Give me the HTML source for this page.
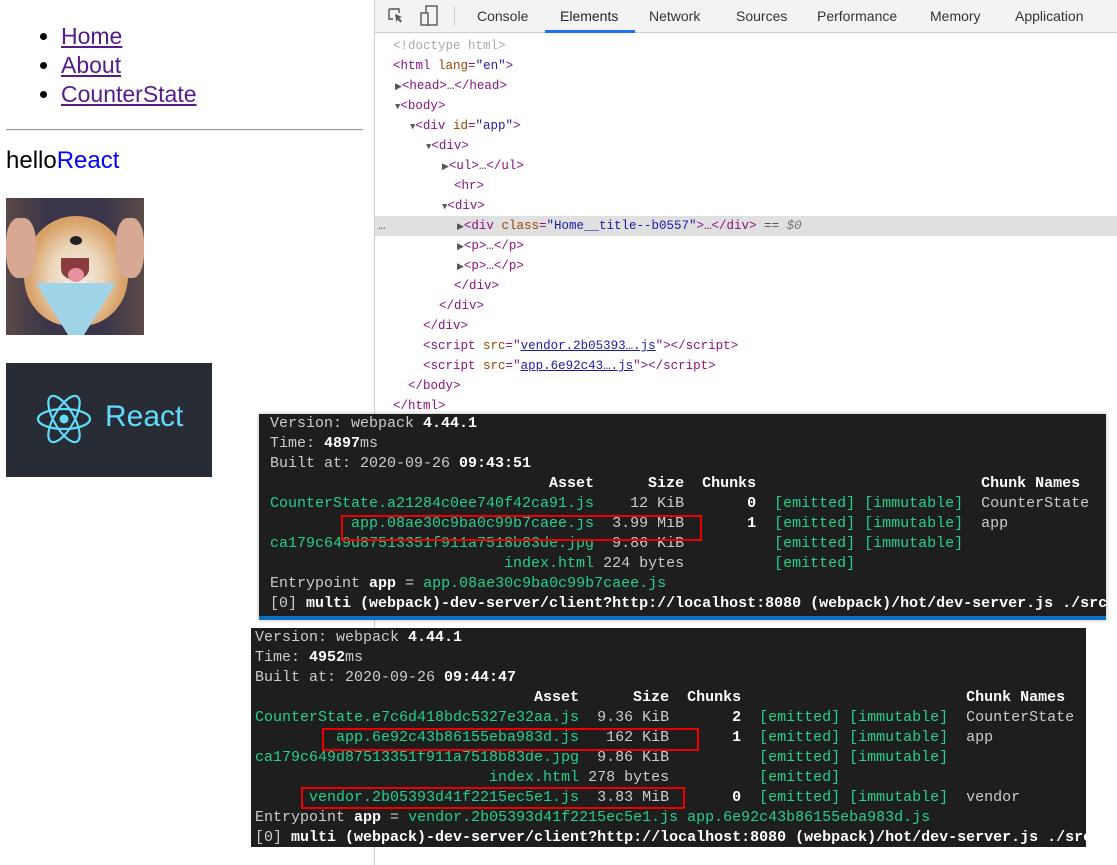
<!DOCTYPE html>
<html><head><meta charset="utf-8"><style>
*{margin:0;padding:0;box-sizing:border-box}
body{width:1117px;height:865px;position:relative;background:#fff;overflow:hidden;font-family:"Liberation Sans",sans-serif}
.abs{position:absolute}
ul.nav{position:absolute;left:61px;top:22px;list-style:disc;font-size:23px;line-height:29px}
ul.nav li{padding-left:0}
ul.nav a{color:#551a8b;text-decoration:underline}
.hr{left:6px;top:129px;width:357px;height:2px;border-top:1px solid #999;border-bottom:1px solid #eee}
.hello{left:6px;top:144px;font-size:24px;line-height:34px}
.dog{left:6px;top:198px;width:138px;height:137px;overflow:hidden;background:#3a3550}
.rbox{left:6px;top:363px;width:206px;height:114px;background:#282c34}
.dt{left:374px;top:0;width:743px;height:865px;border-left:1px solid #ccc;background:#fff}
.tabs{position:absolute;left:0;top:0;width:743px;height:33px;background:#f3f3f3;border-bottom:1px solid #ccc;font-size:14px;color:#333}
.tabs span{position:absolute;top:8px}
.code{position:absolute;left:0;top:36px;width:743px;font-family:"Liberation Mono",monospace;font-size:12.5px;line-height:20px}
.code div{height:20px;white-space:pre;position:relative}
.t{color:#881280}.an{color:#994500}.av{color:#1a1aa6}.g{color:#aaa}
.tri{font-size:9px;color:#555}
.term{position:absolute;background:#1e1e1e;color:#ccc;font-family:"Liberation Mono",monospace;font-size:15px;line-height:20px;white-space:pre;overflow:hidden}
.gr{color:#23d18b}.b{color:#fff;font-weight:bold}
.red{position:absolute;border:2px solid #e00}
</style></head><body>
<ul class="nav"><li><a>Home</a></li><li><a>About</a></li><li><a>CounterState</a></li></ul>
<div class="abs hr"></div>
<div class="abs hello">hello<span style="color:#00f">React</span></div>
<div class="abs dog">
 <div class="abs" style="left:0;top:0;width:138px;height:137px;background:linear-gradient(90deg,#5a4a48 0,#3a3548 30%,#3a3548 70%,#5a4a48 100%)"></div>
 <div class="abs" style="left:18px;top:18px;width:104px;height:110px;border-radius:50% 50% 45% 45%;background:radial-gradient(ellipse at 50% 55%,#f6efe6 0,#ecd6bb 35%,#d9a36a 65%,#c98b4e 100%)"></div>
 <div class="abs" style="left:0;top:20px;width:30px;height:60px;background:#d7a894;border-radius:40%"></div>
 <div class="abs" style="left:110px;top:20px;width:28px;height:60px;background:#d7a894;border-radius:40%"></div>
 <div class="abs" style="left:55px;top:60px;width:28px;height:22px;background:#8a3b3b;border-radius:0 0 50% 50%"></div>
 <div class="abs" style="left:62px;top:70px;width:16px;height:14px;background:#e790a0;border-radius:50%"></div>
 <div class="abs" style="left:64px;top:38px;width:12px;height:9px;background:#222;border-radius:50%"></div>
 <div class="abs" style="left:30px;top:85px;width:80px;height:52px;background:#9fd3e8;clip-path:polygon(0 0,100% 0,60% 100%,40% 100%)"></div>
</div>
<div class="abs rbox">
 <svg class="abs" style="left:30px;top:30px" width="56" height="52" viewBox="-28 -26 56 52"><g fill="none" stroke="#61dafb" stroke-width="2.2"><ellipse rx="26" ry="10"/><ellipse rx="26" ry="10" transform="rotate(60)"/><ellipse rx="26" ry="10" transform="rotate(120)"/></g><circle r="4.5" fill="#61dafb"/></svg>
 <div class="abs" style="left:99px;top:37px;font-size:30px;color:#61dafb">React</div>
</div>
<div class="abs dt">
 <div class="tabs">
  <svg class="abs" style="left:12px;top:7px" width="18" height="18" viewBox="0 0 18 18"><path d="M2 2h10v4M2 2v10h4" fill="none" stroke="#555" stroke-width="1.4"/><path d="M8 7l7 3-3 1 3 3-1.5 1.5-3-3-1 3z" fill="#555"/></svg>
  <svg class="abs" style="left:44px;top:5px" width="20" height="22" viewBox="0 0 20 22"><rect x="7" y="1" width="11" height="19" fill="none" stroke="#555" stroke-width="1.4"/><rect x="2" y="8" width="7" height="12" fill="#f3f3f3" stroke="#555" stroke-width="1.4"/></svg>
  <div class="abs" style="left:79px;top:6px;width:1px;height:20px;background:#ccc"></div>
  <span style="left:102px">Console</span>
  <span style="left:185px;color:#222">Elements</span>
  <div class="abs" style="left:170px;top:30px;width:90px;height:3px;background:#1a73e8"></div>
  <span style="left:274px">Network</span>
  <span style="left:361px">Sources</span>
  <span style="left:442px">Performance</span>
  <span style="left:555px">Memory</span>
  <span style="left:640px">Application</span>
 </div>
 <div class="code">
  <div style="padding-left:18px"><span class="g">&lt;!doctype html&gt;</span></div>
  <div style="padding-left:18px"><span class="t">&lt;html</span> <span class="an">lang</span><span class="t">=</span><span class="av">"en"</span><span class="t">&gt;</span></div>
  <div style="padding-left:20px"><span class="tri">▶</span><span class="t">&lt;head&gt;…&lt;/head&gt;</span></div>
  <div style="padding-left:20px"><span class="tri">▼</span><span class="t">&lt;body&gt;</span></div>
  <div style="padding-left:35px"><span class="tri">▼</span><span class="t">&lt;div</span> <span class="an">id</span><span class="t">=</span><span class="av">"app"</span><span class="t">&gt;</span></div>
  <div style="padding-left:51px"><span class="tri">▼</span><span class="t">&lt;div&gt;</span></div>
  <div style="padding-left:67px"><span class="tri">▶</span><span class="t">&lt;ul&gt;…&lt;/ul&gt;</span></div>
  <div style="padding-left:79px"><span class="t">&lt;hr&gt;</span></div>
  <div style="padding-left:67px"><span class="tri">▼</span><span class="t">&lt;div&gt;</span></div>
  <div style="padding-left:82px;background:#e0e0e0"><span class="abs" style="left:3px;color:#555">…</span><span class="tri">▶</span><span class="t">&lt;div</span> <span class="an">class</span><span class="t">=</span><span class="av">"Home__title--b0557"</span><span class="t">&gt;…&lt;/div&gt;</span> <span style="color:#555">==</span> <span style="color:#777;font-style:italic">$0</span></div>
  <div style="padding-left:82px"><span class="tri">▶</span><span class="t">&lt;p&gt;…&lt;/p&gt;</span></div>
  <div style="padding-left:82px"><span class="tri">▶</span><span class="t">&lt;p&gt;…&lt;/p&gt;</span></div>
  <div style="padding-left:79px"><span class="t">&lt;/div&gt;</span></div>
  <div style="padding-left:64px"><span class="t">&lt;/div&gt;</span></div>
  <div style="padding-left:48px"><span class="t">&lt;/div&gt;</span></div>
  <div style="padding-left:48px"><span class="t">&lt;script</span> <span class="an">src</span><span class="t">=</span><span class="t">"</span><u style="color:#1a1aa6">vendor.2b05393….js</u><span class="t">"&gt;&lt;/script&gt;</span></div>
  <div style="padding-left:48px"><span class="t">&lt;script</span> <span class="an">src</span><span class="t">=</span><span class="t">"</span><u style="color:#1a1aa6">app.6e92c43….js</u><span class="t">"&gt;&lt;/script&gt;</span></div>
  <div style="padding-left:33px"><span class="t">&lt;/body&gt;</span></div>
  <div style="padding-left:18px"><span class="t">&lt;/html&gt;</span></div>
 </div>
</div>

<div class="term" style="left:259px;top:414px;width:847px;height:206px;padding:0 0 0 11px;border-bottom:4px solid #0e70c0;box-shadow:0 0 4px rgba(0,0,0,.3)">Version: webpack <span class="b">4.44.1</span>
Time: <span class="b">4897</span>ms
Built at: 2020-09-26 <span class="b">09:43:51</span>
<span class="b">                               Asset      Size  Chunks                         Chunk Names</span>
<span class="gr">CounterState.a21284c0ee740f42ca91.js</span>    12 KiB       <span class="b">0</span>  <span class="gr">[emitted] [immutable]</span>  CounterState
<span class="gr">         app.08ae30c9ba0c99b7caee.js</span>  3.99 MiB       <span class="b">1</span>  <span class="gr">[emitted] [immutable]</span>  app
<span class="gr">ca179c649d87513351f911a7518b83de.jpg</span>  9.86 KiB          <span class="gr">[emitted] [immutable]</span>
<span class="gr">                          index.html</span> 224 bytes          <span class="gr">[emitted]</span>
Entrypoint <span class="b">app</span> = <span class="gr">app.08ae30c9ba0c99b7caee.js</span>
[0] <span class="b">multi (webpack)-dev-server/client?http://localhost:8080 (webpack)/hot/dev-server.js ./src</span></div>
<div class="red" style="left:341px;top:515px;width:361px;height:26px"></div>

<div class="term" style="left:251px;top:628px;width:835px;height:219px;padding:0 0 0 4px">Version: webpack <span class="b">4.44.1</span>
Time: <span class="b">4952</span>ms
Built at: 2020-09-26 <span class="b">09:44:47</span>
<span class="b">                               Asset      Size  Chunks                         Chunk Names</span>
<span class="gr">CounterState.e7c6d418bdc5327e32aa.js</span>  9.36 KiB       <span class="b">2</span>  <span class="gr">[emitted] [immutable]</span>  CounterState
<span class="gr">         app.6e92c43b86155eba983d.js</span>   162 KiB       <span class="b">1</span>  <span class="gr">[emitted] [immutable]</span>  app
<span class="gr">ca179c649d87513351f911a7518b83de.jpg</span>  9.86 KiB          <span class="gr">[emitted] [immutable]</span>
<span class="gr">                          index.html</span> 278 bytes          <span class="gr">[emitted]</span>
<span class="gr">      vendor.2b05393d41f2215ec5e1.js</span>  3.83 MiB       <span class="b">0</span>  <span class="gr">[emitted] [immutable]</span>  vendor
Entrypoint <span class="b">app</span> = <span class="gr">vendor.2b05393d41f2215ec5e1.js app.6e92c43b86155eba983d.js</span>
[0] <span class="b">multi (webpack)-dev-server/client?http://localhost:8080 (webpack)/hot/dev-server.js ./src</span></div>
<div class="red" style="left:322px;top:728px;width:377px;height:23px"></div>
<div class="red" style="left:301px;top:787px;width:384px;height:22px"></div>
</body></html>
